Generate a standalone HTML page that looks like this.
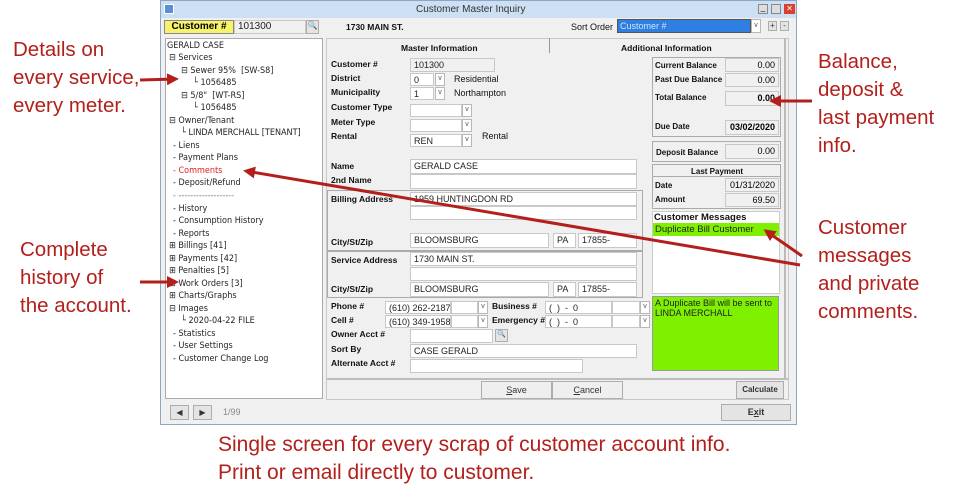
<!DOCTYPE html>
<html><head><meta charset="utf-8"><style>
*{margin:0;padding:0;box-sizing:border-box}
body{width:960px;height:500px;background:#fff;position:relative;overflow:hidden;font-family:"Liberation Sans",Arial,sans-serif}
.a{position:absolute}
.ann{position:absolute;color:#b3201c;font-size:20.5px;line-height:28px;white-space:nowrap}
.win{position:absolute;left:160px;top:0;width:637px;height:425px;background:#f0f0f0;border:1px solid #8ea6c4}
.t{position:absolute;font-size:9px;color:#111;white-space:nowrap}
.b{font-weight:bold;font-size:8.5px}
.in{position:absolute;background:#fff;border:1px solid #c8c8c8;font-size:9px;padding-left:3px;line-height:12px;color:#222;white-space:nowrap;overflow:hidden}
.g{background:#f0f0f0}
.dd{position:absolute;width:10px;border:1px solid #b8b8b8;background:#fff;font-size:7px;text-align:center;color:#555;line-height:10px}
.box{position:absolute;border:1px solid #aaa}
.tr{position:absolute;font-size:9px;color:#222;white-space:nowrap;font-family:"DejaVu Sans Condensed","Liberation Sans Narrow",sans-serif}
.btn{position:absolute;background:#e4e4e4;border:1px solid #adadad;font-size:9px;text-align:center;color:#333}
.v{position:absolute;font-size:9px;text-align:right;padding-right:3px;background:#f0f0f0;border:1px solid #c8c8c8;line-height:13px}
</style></head><body>

<div class="ann" style="left:13px;top:36px">Details on<br>every service,<br>every meter.</div>
<div class="ann" style="left:20px;top:236px">Complete<br>history of<br>the account.</div>
<div class="ann" style="left:818px;top:48px">Balance,<br>deposit &amp;<br>last payment<br>info.</div>
<div class="ann" style="left:818px;top:214px">Customer<br>messages<br>and private<br>comments.</div>
<div class="ann" style="left:218px;top:431px;font-size:21px">Single screen for every scrap of customer account info.<br>Print or email directly to customer.</div>

<div class="win">
 <div class="a" style="left:0;top:0;width:635px;height:17px;background:#cddff2"></div>
 <div class="a" style="left:3px;top:3px;width:10px;height:10px;background:#5a8fd0;border:1px solid #fff"></div>
 <div class="t" style="left:255px;top:3px;font-size:10px;color:#333">Customer Master Inquiry</div>
 <div class="a" style="left:597px;top:3px;width:10px;height:10px;background:#ddd;border:1px solid #888;font-size:8px;line-height:6px;text-align:center">_</div>
 <div class="a" style="left:610px;top:3px;width:10px;height:10px;background:#ddd;border:1px solid #888"></div>
 <div class="a" style="left:623px;top:3px;width:11px;height:10px;background:#d8402f;color:#fff;font-size:8px;line-height:9px;text-align:center">✕</div>

 <div class="a" style="left:3px;top:19px;width:70px;height:14px;background:#f7f36a;border:1px solid #888;font-size:10px;font-weight:bold;text-align:center;line-height:12px">Customer #</div>
 <div class="in g" style="left:73px;top:19px;width:72px;height:14px;font-size:10px">101300</div>
 <div class="btn" style="left:145px;top:19px;width:13px;height:14px;color:#a80;font-size:8px">🔍</div>
 <div class="t b" style="left:185px;top:21px">1730 MAIN ST.</div>
 <div class="t" style="left:410px;top:21px;font-size:9px">Sort Order</div>
 <div class="a" style="left:456px;top:18px;width:134px;height:14px;background:#2f7fe0;border:1px solid #555;color:#cfe4ff;font-size:9px;padding-left:2px;line-height:12px">Customer #</div>
 <div class="dd" style="left:590px;top:18px;height:14px;line-height:12px">v</div>
 <div class="btn" style="left:607px;top:20px;width:9px;height:10px;font-size:8px;line-height:8px">+</div>
 <div class="btn" style="left:619px;top:20px;width:9px;height:10px;font-size:8px;line-height:8px">-</div>

 <div class="a" style="left:4px;top:37px;width:158px;height:361px;background:#fff;border:1px solid #aaa"></div>
 <div class="tr" style="left:6px;top:40px">GERALD CASE</div>
 <div class="tr" style="left:8px;top:52px">⊟ Services</div>
 <div class="tr" style="left:20px;top:65px">⊟ Sewer 95%&nbsp; [SW-S8]</div>
 <div class="tr" style="left:32px;top:77px">└ 1056485</div>
 <div class="tr" style="left:20px;top:90px">⊟ 5/8"&nbsp; [WT-RS]</div>
 <div class="tr" style="left:32px;top:102px">└ 1056485</div>
 <div class="tr" style="left:8px;top:115px">⊟ Owner/Tenant</div>
 <div class="tr" style="left:20px;top:127px">└ LINDA MERCHALL [TENANT]</div>
 <div class="tr" style="left:12px;top:140px">- Liens</div>
 <div class="tr" style="left:12px;top:152px">- Payment Plans</div>
 <div class="tr" style="left:12px;top:165px;color:#e02020">- Comments</div>
 <div class="tr" style="left:12px;top:177px">- Deposit/Refund</div>
 <div class="tr" style="left:12px;top:190px;color:#777">- -------------------</div>
 <div class="tr" style="left:12px;top:203px">- History</div>
 <div class="tr" style="left:12px;top:215px">- Consumption History</div>
 <div class="tr" style="left:12px;top:228px">- Reports</div>
 <div class="tr" style="left:8px;top:240px">⊞ Billings [41]</div>
 <div class="tr" style="left:8px;top:253px">⊞ Payments [42]</div>
 <div class="tr" style="left:8px;top:265px">⊞ Penalties [5]</div>
 <div class="tr" style="left:8px;top:278px">⊞ Work Orders [3]</div>
 <div class="tr" style="left:8px;top:290px">⊞ Charts/Graphs</div>
 <div class="tr" style="left:8px;top:303px">⊟ Images</div>
 <div class="tr" style="left:20px;top:315px">└ 2020-04-22 FILE</div>
 <div class="tr" style="left:12px;top:328px">- Statistics</div>
 <div class="tr" style="left:12px;top:340px">- User Settings</div>
 <div class="tr" style="left:12px;top:353px">- Customer Change Log</div>
 <div class="btn" style="left:9px;top:404px;width:19px;height:15px;font-size:8px;line-height:13px">◀</div>
 <div class="btn" style="left:32px;top:404px;width:19px;height:15px;font-size:8px;line-height:13px">▶</div>
 <div class="t" style="left:62px;top:406px;color:#888">1/99</div>

 <div class="a" style="left:165px;top:37px;width:463px;height:362px;border:1px solid #c8c8c8"></div>
 <div class="a" style="left:388px;top:37px;width:1px;height:15px;background:#999"></div>
 <div class="a" style="left:623px;top:37px;width:2px;height:340px;background:#bbb"></div>
 <div class="t b" style="left:240px;top:42px">Master Information</div>
 <div class="t b" style="left:460px;top:42px">Additional Information</div>

 <div class="t b" style="left:170px;top:58px">Customer #</div><div class="in g" style="left:249px;top:57px;width:85px;height:14px">101300</div>
 <div class="t b" style="left:170px;top:72px">District</div><div class="in" style="left:249px;top:72px;width:24px;height:13px">0</div><div class="dd" style="left:274px;top:72px;height:13px">v</div><div class="t" style="left:293px;top:73px">Residential</div>
 <div class="t b" style="left:170px;top:86px">Municipality</div><div class="in" style="left:249px;top:86px;width:24px;height:13px">1</div><div class="dd" style="left:274px;top:86px;height:13px">v</div><div class="t" style="left:293px;top:87px">Northampton</div>
 <div class="t b" style="left:170px;top:101px">Customer Type</div><div class="in" style="left:249px;top:103px;width:52px;height:13px"></div><div class="dd" style="left:301px;top:103px;height:13px">v</div>
 <div class="t b" style="left:170px;top:116px">Meter Type</div><div class="in" style="left:249px;top:118px;width:52px;height:13px"></div><div class="dd" style="left:301px;top:118px;height:13px">v</div>
 <div class="t b" style="left:170px;top:130px">Rental</div><div class="in" style="left:249px;top:133px;width:52px;height:13px">REN</div><div class="dd" style="left:301px;top:133px;height:13px">v</div><div class="t" style="left:321px;top:130px">Rental</div>

 <div class="t b" style="left:170px;top:160px">Name</div><div class="in" style="left:249px;top:158px;width:227px;height:15px">GERALD CASE</div>
 <div class="t b" style="left:170px;top:174px">2nd Name</div><div class="in" style="left:249px;top:173px;width:227px;height:15px"></div>
 <div class="box" style="left:166px;top:189px;width:316px;height:61px"></div>
 <div class="t b" style="left:170px;top:193px">Billing Address</div>
 <div class="in" style="left:249px;top:191px;width:227px;height:14px">1959 HUNTINGDON RD</div>
 <div class="in" style="left:249px;top:205px;width:227px;height:14px"></div>
 <div class="t b" style="left:170px;top:236px">City/St/Zip</div>
 <div class="in" style="left:249px;top:232px;width:139px;height:15px">BLOOMSBURG</div><div class="in" style="left:392px;top:232px;width:23px;height:15px">PA</div><div class="in" style="left:417px;top:232px;width:59px;height:15px">17855-</div>
 <div class="box" style="left:166px;top:250px;width:316px;height:47px"></div>
 <div class="t b" style="left:170px;top:254px">Service Address</div>
 <div class="in" style="left:249px;top:251px;width:227px;height:14px">1730 MAIN ST.</div>
 <div class="in" style="left:249px;top:266px;width:227px;height:14px"></div>
 <div class="t b" style="left:170px;top:283px">City/St/Zip</div>
 <div class="in" style="left:249px;top:281px;width:139px;height:15px">BLOOMSBURG</div><div class="in" style="left:392px;top:281px;width:23px;height:15px">PA</div><div class="in" style="left:417px;top:281px;width:59px;height:15px">17855-</div>

 <div class="t b" style="left:170px;top:300px">Phone #</div><div class="in" style="left:224px;top:300px;width:66px;height:13px">(610) 262-2187</div><div class="in" style="left:290px;top:300px;width:27px;height:13px"></div><div class="dd" style="left:317px;top:300px;height:13px">v</div>
 <div class="t b" style="left:331px;top:300px">Business #</div><div class="in" style="left:384px;top:300px;width:67px;height:13px">(&nbsp; )&nbsp; -&nbsp; 0</div><div class="in" style="left:451px;top:300px;width:28px;height:13px"></div><div class="dd" style="left:479px;top:300px;height:13px">v</div>
 <div class="t b" style="left:170px;top:314px">Cell #</div><div class="in" style="left:224px;top:314px;width:66px;height:13px">(610) 349-1958</div><div class="in" style="left:290px;top:314px;width:27px;height:13px"></div><div class="dd" style="left:317px;top:314px;height:13px">v</div>
 <div class="t b" style="left:331px;top:314px">Emergency #</div><div class="in" style="left:384px;top:314px;width:67px;height:13px">(&nbsp; )&nbsp; -&nbsp; 0</div><div class="in" style="left:451px;top:314px;width:28px;height:13px"></div><div class="dd" style="left:479px;top:314px;height:13px">v</div>
 <div class="t b" style="left:170px;top:328px">Owner Acct #</div><div class="in" style="left:249px;top:328px;width:83px;height:14px"></div><div class="btn" style="left:334px;top:328px;width:13px;height:13px;font-size:7px">🔍</div>
 <div class="t b" style="left:170px;top:343px">Sort By</div><div class="in" style="left:249px;top:343px;width:227px;height:14px">CASE GERALD</div>
 <div class="t b" style="left:170px;top:357px">Alternate Acct #</div><div class="in" style="left:249px;top:358px;width:173px;height:14px"></div>
 <div class="a" style="left:166px;top:377px;width:461px;height:2px;background:#bdbdbd"></div>
 <div class="btn" style="left:320px;top:380px;width:71px;height:18px;line-height:16px;background:#efefef"><u>S</u>ave</div>
 <div class="btn" style="left:391px;top:380px;width:71px;height:18px;line-height:16px;background:#efefef"><u>C</u>ancel</div>
 <div class="btn" style="left:575px;top:380px;width:48px;height:18px;line-height:16px;font-weight:bold;font-size:8px">Calculate</div>
 <div class="btn" style="left:560px;top:403px;width:70px;height:17px;line-height:15px;font-weight:bold">E<u>x</u>it</div>

 <div class="box" style="left:491px;top:56px;width:129px;height:80px"></div>
 <div class="t b" style="left:494px;top:60px;font-size:8px">Current Balance</div><div class="v" style="left:564px;top:57px;width:54px;height:14px">0.00</div>
 <div class="t b" style="left:494px;top:74px;font-size:8px">Past Due Balance</div><div class="v" style="left:564px;top:72px;width:54px;height:14px">0.00</div>
 <div class="t b" style="left:494px;top:92px;font-size:8px">Total Balance</div><div class="v" style="left:564px;top:90px;width:54px;height:15px;font-weight:bold">0.00</div>
 <div class="t b" style="left:494px;top:121px;font-size:8px">Due Date</div><div class="v" style="left:564px;top:119px;width:54px;height:15px;font-weight:bold">03/02/2020</div>
 <div class="box" style="left:491px;top:140px;width:129px;height:21px"></div>
 <div class="t b" style="left:495px;top:147px;font-size:8px">Deposit Balance</div><div class="v" style="left:564px;top:143px;width:54px;height:15px">0.00</div>
 <div class="box" style="left:491px;top:163px;width:129px;height:45px"></div>
 <div class="t b" style="left:530px;top:166px;font-size:8px">Last Payment</div>
 <div class="a" style="left:492px;top:175px;width:127px;height:1px;background:#aaa"></div>
 <div class="t b" style="left:494px;top:180px;font-size:8px">Date</div><div class="v" style="left:564px;top:177px;width:54px;height:14px">01/31/2020</div>
 <div class="t b" style="left:494px;top:194px;font-size:8px">Amount</div><div class="v" style="left:564px;top:192px;width:54px;height:14px">69.50</div>
 <div class="a" style="left:491px;top:210px;width:128px;height:83px;background:#fff;border:1px solid #ccc"></div>
 <div class="t" style="left:493px;top:211px;font-weight:bold;font-size:9.5px">Customer Messages</div>
 <div class="a" style="left:492px;top:222px;width:126px;height:13px;background:#7ef000;font-size:9.5px;padding-left:2px;line-height:13px;color:#222">Duplicate Bill Customer</div>
 <div class="a" style="left:491px;top:295px;width:127px;height:75px;background:#7ef000;border:1px solid #999;font-size:9px;padding:1px 2px;line-height:10px;color:#222">A Duplicate Bill will be sent to LINDA MERCHALL</div>
</div>

<svg class="a" style="left:0;top:0" width="960" height="500">
 <defs><marker id="m" markerWidth="4" markerHeight="4" refX="3" refY="2" orient="auto"><path d="M0,0 L4,2 L0,4 z" fill="#b3201c"/></marker></defs>
 <g stroke="#b3201c" stroke-width="3" fill="none" marker-end="url(#m)">
  <line x1="140" y1="80" x2="176" y2="79"/>
  <line x1="140" y1="282" x2="176" y2="282"/>
  <line x1="812" y1="101" x2="772" y2="101"/>
  <line x1="800" y1="265" x2="246" y2="171"/>
  <line x1="802" y1="256" x2="766" y2="231"/>
 </g>
</svg>
</body></html>
